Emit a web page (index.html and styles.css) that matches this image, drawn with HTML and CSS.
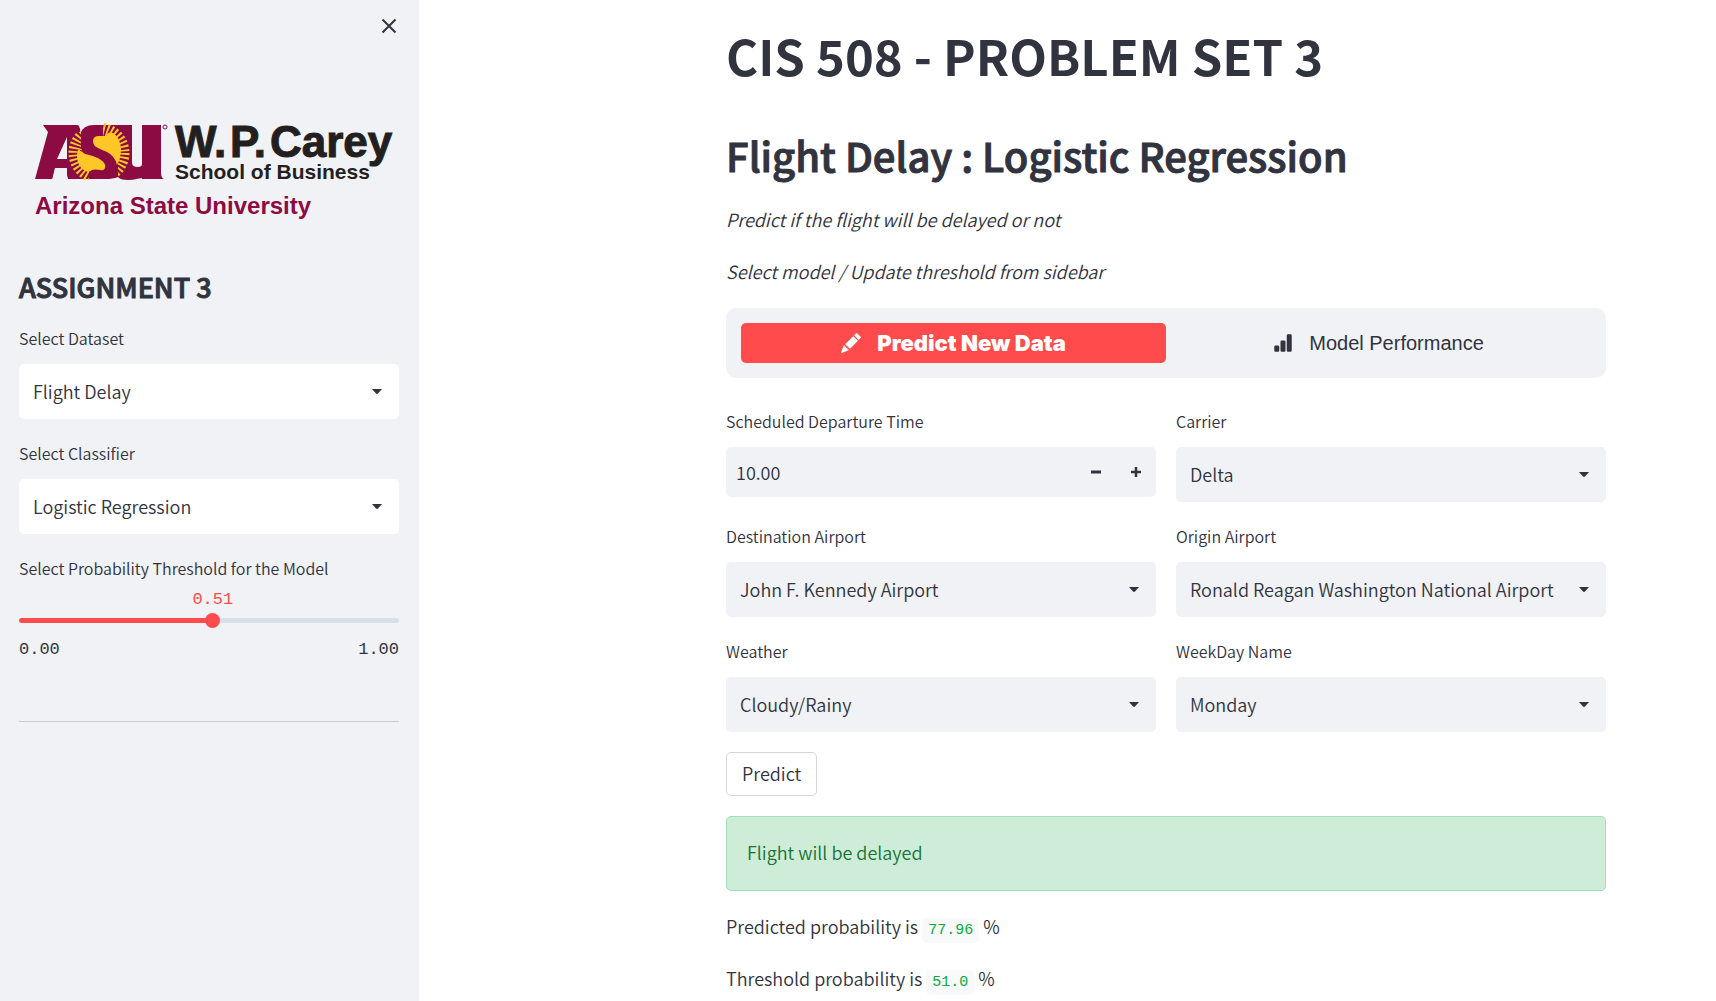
FILE: index.html
```html
<!DOCTYPE html>
<html lang="en">
<head>
<meta charset="utf-8">
<title>CIS 508 - Problem Set 3</title>
<link rel="stylesheet" href="styles.css">
</head>
<body>
<div class="app">
  <aside class="sidebar">
    <div class="sidebar-top">
      <button class="close" type="button" aria-label="Close sidebar">
        <svg width="16" height="16" viewBox="0 0 16 16"><path d="M1.500 1.500l13 13M14.500 1.500l-13 13" fill="none" stroke="currentColor" stroke-width="2"/></svg>
      </button>
    </div>
    <svg class="logo" width="380" height="120" viewBox="0 0 380 120" role="img" aria-label="ASU W. P. Carey School of Business, Arizona State University">
      <defs>
        <clipPath id="rays-right"><path d="M84 18h32v57H99V52L84 35z"/></clipPath>
        <clipPath id="rays-left"><path d="M45 28h17v16l8 18v14H45z"/></clipPath>
      </defs>
      <g class="logo-mark" fill="#8c0b42">
        <text x="18" y="74">ASU</text>
        <path d="M24 21h35q3 3 2 9 3-9 14-9h67v47q0 6 3 7h-22v-3q-4 4-14 4-8 0-10-3-5 2-13 2H49l-1-11H36l-2 11H16l13-47z"/>
        <circle cx="146" cy="23" r="2" fill="none" stroke="#8c0b42"/>
      </g>
      <path fill="#f0f2f6" d="M48 33v22H38zM36 64h12v12H33zM113 20h10v40q0 3-4 3-6 0-6-4z"/>
      <g fill="none" stroke="#ffc627" stroke-width="15" stroke-dasharray="1.700 1.900">
        <circle cx="80" cy="49" r="23" clip-path="url(#rays-right)"/>
        <circle cx="80" cy="49" r="23" clip-path="url(#rays-left)"/>
      </g>
      <path fill="#ffc627" d="M74 37q0-5 6-5h7q2-5 7-3 7 4 8 16 0 9-4 16-2-9-10-13-5-2-9-4-5-2-5-7z"/>
      <path fill="#ffc627" d="M60 45q2 4 10 6 8 2 12 5 5 3 4 8-1 3-5 2-5-1-8 0-3 3-7 1-8-5-8-15 0-5 2-7z"/>
      <g class="logo-text" fill="#231f20" stroke="#231f20">
        <text class="logo-name" x="156" y="53">W.</text>
        <text class="logo-name" x="211" y="53">P.</text>
        <text class="logo-name" x="251" y="53">Carey</text>
        <text class="logo-sub" x="156" y="75">School of Business</text>
      </g>
      <text class="logo-uni" x="16" y="110" fill="#8c0b42" stroke="#8c0b42">Arizona State University</text>
    </svg>
    <h3>ASSIGNMENT 3</h3>
    <div class="fields">
      <div class="field">
        <label for="dataset">Select Dataset</label>
        <div class="select"><select id="dataset"><option>Flight Delay</option></select><svg width="10" height="5" viewBox="0 0 10 5"><path d="M0 0h10L6 4.500Q5 5.300 4 4.500z" fill="currentColor"/></svg></div>
      </div>
      <div class="field">
        <label for="classifier">Select Classifier</label>
        <div class="select"><select id="classifier"><option>Logistic Regression</option></select><svg width="10" height="5" viewBox="0 0 10 5"><path d="M0 0h10L6 4.500Q5 5.300 4 4.500z" fill="currentColor"/></svg></div>
      </div>
      <div class="slider" style="--value:51%">
        <label for="threshold">Select Probability Threshold for the Model</label>
        <output for="threshold">0.51</output>
        <input id="threshold" type="range" min="0" max="1" step="0.01" value="0.51">
        <div class="ticks"><span>0.00</span><span>1.00</span></div>
      </div>
    </div>
    <hr>
  </aside>
  <main class="main">
    <h1>CIS 508 - PROBLEM SET 3</h1>
    <h2>Flight Delay : Logistic Regression</h2>
    <p><em>Predict if the flight will be delayed or not</em></p>
    <p><em>Select model / Update threshold from sidebar</em></p>
    <nav class="tabs">
      <button class="tab active" type="button">
        <svg width="20" height="20" viewBox="0 0 16 16" fill="currentColor"><path d="M12.854.146a.5.5 0 0 0-.707 0L10.500 1.793 14.207 5.500l1.647-1.646a.5.5 0 0 0 0-.708zm.646 6.061L9.793 2.500 3.293 9H3.500a.5.5 0 0 1 .5.5v.5h.5a.5.5 0 0 1 .5.5v.5h.5a.5.5 0 0 1 .5.5v.5h.5a.5.5 0 0 1 .5.5v.207zm-7.468 7.468A.5.5 0 0 1 6 13.500V13h-.5a.5.5 0 0 1-.5-.5V12h-.5a.5.5 0 0 1-.5-.5V11h-.5a.5.5 0 0 1-.5-.5V10h-.5a.5.5 0 0 1-.175-.032l-.179.178a.5.5 0 0 0-.11.168l-2 5a.5.5 0 0 0 .65.65l5-2a.5.5 0 0 0 .168-.11z"/></svg>
        <span>Predict New Data</span>
      </button>
      <button class="tab" type="button">
        <svg width="20" height="20" viewBox="0 0 16 16" fill="currentColor"><path d="M1 11a1 1 0 0 1 1-1h2a1 1 0 0 1 1 1v3a1 1 0 0 1-1 1H2a1 1 0 0 1-1-1zm5-4a1 1 0 0 1 1-1h2a1 1 0 0 1 1 1v7a1 1 0 0 1-1 1H7a1 1 0 0 1-1-1zm5-5a1 1 0 0 1 1-1h2a1 1 0 0 1 1 1v12a1 1 0 0 1-1 1h-2a1 1 0 0 1-1-1z"/></svg>
        <span>Model Performance</span>
      </button>
    </nav>
    <form class="form">
      <div class="grid">
        <div class="field">
          <label for="departure">Scheduled Departure Time</label>
          <div class="number">
            <input id="departure" type="text" inputmode="decimal" value="10.00">
            <button type="button" aria-label="Decrease"><svg width="10" height="10" viewBox="0 0 10 10"><path d="M0 5h10" stroke="currentColor" stroke-width="3"/></svg></button>
            <button type="button" aria-label="Increase"><svg width="10" height="10" viewBox="0 0 10 10"><path d="M0 5h10M5 0v10" stroke="currentColor" stroke-width="2.500"/></svg></button>
          </div>
        </div>
        <div class="field">
          <label for="carrier">Carrier</label>
          <div class="select"><select id="carrier"><option>Delta</option></select><svg width="10" height="5" viewBox="0 0 10 5"><path d="M0 0h10L6 4.500Q5 5.300 4 4.500z" fill="currentColor"/></svg></div>
        </div>
        <div class="field">
          <label for="destination">Destination Airport</label>
          <div class="select"><select id="destination"><option>John F. Kennedy Airport</option></select><svg width="10" height="5" viewBox="0 0 10 5"><path d="M0 0h10L6 4.500Q5 5.300 4 4.500z" fill="currentColor"/></svg></div>
        </div>
        <div class="field">
          <label for="origin">Origin Airport</label>
          <div class="select"><select id="origin"><option>Ronald Reagan Washington National Airport</option></select><svg width="10" height="5" viewBox="0 0 10 5"><path d="M0 0h10L6 4.500Q5 5.300 4 4.500z" fill="currentColor"/></svg></div>
        </div>
        <div class="field">
          <label for="weather">Weather</label>
          <div class="select"><select id="weather"><option>Cloudy/Rainy</option></select><svg width="10" height="5" viewBox="0 0 10 5"><path d="M0 0h10L6 4.500Q5 5.300 4 4.500z" fill="currentColor"/></svg></div>
        </div>
        <div class="field">
          <label for="weekday">WeekDay Name</label>
          <div class="select"><select id="weekday"><option>Monday</option></select><svg width="10" height="5" viewBox="0 0 10 5"><path d="M0 0h10L6 4.500Q5 5.300 4 4.500z" fill="currentColor"/></svg></div>
        </div>
      </div>
      <button class="predict" type="button">Predict</button>
    </form>
    <div class="alert" role="status">Flight will be delayed</div>
    <p>Predicted probability is <code>77.96</code> %</p>
    <p>Threshold probability is <code>51.0</code> %</p>
  </main>
</div>
</body>
</html>
```

FILE: styles.css
```css
* { box-sizing: border-box; }

body {
  margin: 0;
  background: #fff;
  color: #31333f;
  font: 350 18px/32px "Noto Sans CJK SC", "Noto Sans", sans-serif;
}

button, input, select { font: inherit; color: inherit; }
button { cursor: pointer; }
h1, h2, h3, p { margin: 0; }
svg { display: block; }

.app { display: flex; min-height: 100vh; overflow: hidden; }

.sidebar {
  flex: none;
  width: 419px;
  padding: 0 20px 40px 19px;
  background: #f0f2f6;
}
.sidebar-top { display: flex; justify-content: flex-end; height: 104px; padding: 16px 0; }
.close { width: 20px; height: 20px; padding: 2px; border: 0; background: none; }
.logo { max-width: 100%; }
.logo-mark { font: 900 62px Roboto, sans-serif; }
.logo-text, .logo-uni { font-family: "Liberation Sans", Arial, sans-serif; font-weight: 700; stroke-width: 1px; }
.logo-name { font-size: 44px; }
.logo-sub { font-size: 21px; stroke: none; }
.logo-uni { font-size: 24px; stroke: none; }

h1 { font-size: 49px; line-height: 66px; font-weight: 700; }
h2 { font-size: 40px; line-height: 54px; font-weight: 500; }
h3 { font-size: 27px; line-height: 34px; font-weight: 500; }
h2, h3 { -webkit-text-stroke: 1px currentColor; }

.sidebar h3 { margin: 46px 0 20px; }
.sidebar hr { height: 1px; margin: 58px 0 0; border: 0; background: #c9cbd2; }

.fields { display: grid; gap: 20px; }
.grid { display: grid; grid-template-columns: 1fr 1fr; gap: 20px; }
.field { min-width: 0; }
.field label, .slider label { display: block; font-size: 16px; line-height: 28px; }
.field label { margin-bottom: 12px; }

.select { display: grid; align-items: center; }
.select select, .select svg { grid-area: 1 / 1; }
.select select {
  appearance: none;
  width: 100%;
  height: 55px;
  padding: 0 40px 2px 14px;
  border: 0;
  border-radius: 5px;
  background: #f0f2f6;
}
.select svg { justify-self: end; margin-right: 17px; pointer-events: none; }
.sidebar .select select { background: #fff; }

.slider output {
  display: block;
  width: 100px;
  margin-top: 5px;
  margin-left: calc(var(--value) - 50px);
  text-align: center;
  color: #ff4b4b;
}
.slider output, .ticks { font: 17px/26px "Liberation Mono", monospace; }
.slider input {
  appearance: none;
  display: block;
  width: 100%;
  height: 15px;
  margin: 0;
  background: none;
}
.slider input::-webkit-slider-runnable-track {
  height: 5px;
  border-radius: 3px;
  background: linear-gradient(to right, #ff4b4b var(--value), #d9dfe9 var(--value));
}
.slider input::-webkit-slider-thumb {
  appearance: none;
  width: 15px;
  height: 15px;
  margin-top: -5px;
  border-radius: 50%;
  background: #ff4b4b;
}
.ticks { display: flex; justify-content: space-between; margin-top: 9px; }

.main { flex: 1; min-width: 0; max-width: 1297px; padding: 22px 110px 0 307px; }
.main h1 { margin-bottom: 40px; }
.main h2 { margin-bottom: 21px; }
.main p { margin-bottom: 20px; }

.tabs {
  display: grid;
  grid-template-columns: 1fr 1fr;
  margin: 21px 0 29px;
  padding: 15px;
  border-radius: 10px;
  background: #f0f2f6;
}
.tab {
  display: flex;
  align-items: center;
  justify-content: center;
  gap: 16px;
  height: 40px;
  border: 0;
  border-radius: 5px;
  background: none;
  font: 20px/24px "Liberation Sans", Arial, sans-serif;
}
.tab.active { background: #ff4b4b; color: #fff; font-family: Inter, sans-serif; font-size: 22px; font-weight: 900; }

.number { display: flex; height: 50px; border-radius: 5px; background: #f0f2f6; }
.number input { flex: 1; min-width: 0; padding: 0 10px; border: 0; background: none; }
.number button { display: grid; place-items: center; width: 40px; padding: 0; border: 0; background: none; }

.predict {
  display: block;
  height: 44px;
  margin: 20px 0;
  padding: 0 15px 2px;
  border: 1px solid #d6d6d8;
  border-radius: 5px;
  background: #fff;
}
.alert {
  margin-bottom: 19px;
  padding: 19px 20px 22px;
  border: 1px solid #a3dfb8;
  border-radius: 5px;
  background: #ceedd8;
  color: #177233;
}
code {
  padding: 4px 6px;
  border-radius: 5px;
  background: #f8f9fb;
  color: #09ab3b;
  font: 15px/20px "Liberation Mono", monospace;
}
```
